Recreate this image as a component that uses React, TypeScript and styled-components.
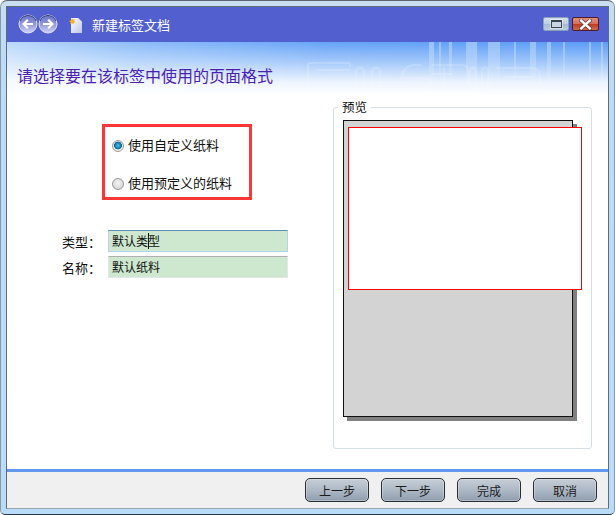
import styled, { createGlobalStyle } from "styled-components";

const GlobalStyle = createGlobalStyle`
  html, body {
    margin: 0;
    padding: 0;
    background: #ffffff;
  }
  body {
    font-family: "Noto Sans CJK SC", "Liberation Sans", sans-serif;
    font-size: 12px;
    color: #111111;
  }
`;

const NavArrow = ({ back }: { back?: boolean }) => (
  <svg width="20" height="20" viewBox="0 0 20 20">
    <defs>
      <linearGradient id={back ? "navA" : "navB"} x1="0" y1="0" x2="0" y2="1">
        <stop offset="0" stopColor="#6a73c4" />
        <stop offset="0.5" stopColor="#8f97dc" />
        <stop offset="1" stopColor="#d0d5f4" />
      </linearGradient>
    </defs>
    <circle cx="10" cy="10" r="9" fill={`url(#${back ? "navA" : "navB"})`} stroke="#dfe2f6" strokeWidth="1" />
    <path d="M2 7a8.6 8.6 0 0 1 16 0" fill="none" stroke="#333a78" strokeWidth="1" />
    <path
      d={back ? "M15 10H6M9.8 5.8L5.6 10l4.2 4.2" : "M5 10h9M10.2 5.8l4.2 4.2-4.2 4.2"}
      fill="none"
      stroke="#ffffff"
      strokeWidth="2.2"
    />
  </svg>
);

const DocIcon = () => (
  <svg width="14" height="17" viewBox="0 0 14 17">
    <defs>
      <linearGradient id="docFill" x1="0" y1="0" x2="1" y2="1">
        <stop offset="0" stopColor="#ffffff" />
        <stop offset="1" stopColor="#bcc6e6" />
      </linearGradient>
    </defs>
    <path d="M2 1h7l4 4v11H2z" fill="url(#docFill)" />
    <path d="M9 1l4 4H9z" fill="#dfe3f2" />
    <path d="M3 1l1 1.6 1.8-.4-.5 1.8 1.4 1.2-1.8.4-.4 1.8L3 6.2l-1.7.9.3-1.9L0 4l1.8-.5z" fill="#f7b21c" />
  </svg>
);

const CloseGlyph = () => (
  <svg width="13" height="11" viewBox="0 0 13 11">
    <path d="M2 1.5l9 8M11 1.5l-9 8" stroke="#4a3a3a" strokeWidth="4" strokeLinecap="square" opacity="0.75" />
    <path d="M2.2 1.6l8.6 7.8M10.8 1.6L2.2 9.4" stroke="#ffffff" strokeWidth="2.4" strokeLinecap="square" />
  </svg>
);

const Watermark = () => (
  <WatermarkSvg width="310" height="55" viewBox="0 0 310 55">
    <defs>
      <linearGradient id="barFade" x1="0" y1="0" x2="0" y2="1">
        <stop offset="0" stopColor="#ffffff" stopOpacity="0.34" />
        <stop offset="1" stopColor="#ffffff" stopOpacity="0" />
      </linearGradient>
    </defs>
    {[
      [131, 5],
      [141, 2],
      [151, 3],
      [168, 11],
      [190, 12],
      [216, 2],
      [232, 6],
      [249, 4],
      [265, 2],
      [291, 2],
      [303, 2],
    ].map(([x, w]) => (
      <rect key={x} x={x} y="0" width={w} height="46" fill="url(#barFade)" />
    ))}
    <g fill="none" stroke="#ffffff" strokeWidth="2" opacity="0.16">
      <path d="M10 21h42M10 21v22M18 28h34M52 21v4" />
      <path d="M58 44V30c0-6 8-6 8 0v14c0 3 8 3 8 0V30c0-6 8-6 8 0v14" />
      <path d="M104 36c0-6 4-13 12-13h8M102 36h24c6 0 8 3 8 8" />
      <path d="M134 23h30c6 0 6 4 6 8v10M134 32h20M146 23v20" />
      <path d="M172 44V30c0-6 6-6 6 0v14c0 3 6 3 6 0V30c0-6 6-6 6 0v14" />
      <path d="M198 26h36c6 0 8 4 8 10v7M206 35h30" />
    </g>
  </WatermarkSvg>
);

export default function App() {
  return (
    <>
      <GlobalStyle />
      <Frame>
        <Client>
          <TitleBar>
            <NavGroup>
              <NavArrow back />
              <NavArrow />
            </NavGroup>
            <DocSlot>
              <DocIcon />
            </DocSlot>
            <TitleText>新建标签文档</TitleText>
            <CaptionGroup>
              <RestoreButton>
                <RestoreGlyph />
              </RestoreButton>
              <CloseButton>
                <CloseGlyph />
              </CloseButton>
            </CaptionGroup>
          </TitleBar>

          <Header>
            <Watermark />
            <Heading>请选择要在该标签中使用的页面格式</Heading>
          </Header>

          <Body>
            <LeftColumn>
              <RadioBox>
                <RadioRow>
                  <Radio $checked />
                  使用自定义纸料
                </RadioRow>
                <RadioRow>
                  <Radio />
                  使用预定义的纸料
                </RadioRow>
              </RadioBox>
              <Fields>
                <FieldRow>
                  <FieldLabel>类型：</FieldLabel>
                  <FieldInput $focused>
                    默认类
                    <Caret />型
                  </FieldInput>
                </FieldRow>
                <FieldRow>
                  <FieldLabel>名称：</FieldLabel>
                  <FieldInput>默认纸料</FieldInput>
                </FieldRow>
              </Fields>
            </LeftColumn>

            <PreviewGroup>
              <PreviewLegend>预览</PreviewLegend>
              <Sheet>
                <LabelArea />
              </Sheet>
            </PreviewGroup>
          </Body>

          <Footer>
            <WizardButton>上一步</WizardButton>
            <WizardButton>下一步</WizardButton>
            <WizardButton>完成</WizardButton>
            <WizardButton>取消</WizardButton>
          </Footer>
        </Client>
      </Frame>
    </>
  );
}

const Frame = styled.div`
  box-sizing: border-box;
  width: 615px;
  height: 515px;
  padding: 5px;
  background: linear-gradient(to bottom, #c9dff0 0, #bcdcf8 40px, #b9dcfb 100%);
  border-top: 1px solid #5c6670;
  border-bottom: 1px solid #2c3640;
  border-left: 1px solid #8c98a4;
  border-right: 1px solid #8c98a4;
  border-radius: 7px 7px 5px 5px;
`;

const Client = styled.div`
  box-sizing: border-box;
  height: 100%;
  display: flex;
  flex-direction: column;
  background: #ffffff;
  border: 1px solid #5f6c78;
  border-bottom-color: #9aa4ac;
`;

const TitleBar = styled.div`
  height: 35px;
  flex: none;
  display: flex;
  align-items: center;
  padding: 0 9px 0 11px;
  background: #525fce;
`;

const NavGroup = styled.div`
  display: flex;
  margin-top: -1px;
  line-height: 0;
`;

const DocSlot = styled.div`
  margin-left: 11px;
  margin-top: 1px;
  line-height: 0;
`;

const TitleText = styled.span`
  margin-left: 9px;
  font-size: 13px;
  color: #ffffff;
`;

const CaptionGroup = styled.div`
  margin-left: auto;
  display: flex;
  gap: 3px;
  margin-top: -1px;
`;

const CaptionButton = styled.div`
  box-sizing: border-box;
  height: 14px;
  display: flex;
  align-items: center;
  justify-content: center;
  border-radius: 2px;
`;

const RestoreButton = styled(CaptionButton)`
  width: 26px;
  border: 1px solid #8ba0b6;
  background: linear-gradient(to bottom, #d3e0ec 0, #bccedd 50%, #a6bdd1 52%, #bacddc 100%);
`;

const RestoreGlyph = styled.span`
  box-sizing: border-box;
  width: 11px;
  height: 8px;
  border: 1px solid #3a4656;
  border-top-width: 2px;
  background: #c9d6e2;
  box-shadow: 0 0 0 1px rgba(255, 255, 255, 0.4);
`;

const CloseButton = styled(CaptionButton)`
  width: 27px;
  border: 1px solid #4c1c2c;
  background: linear-gradient(to bottom, #e0907c 0, #d5705a 48%, #bd3c20 52%, #cf6a50 100%);
`;

const Header = styled.div`
  position: relative;
  height: 55px;
  flex: none;
  display: flex;
  align-items: flex-end;
  padding-left: 10px;
  box-sizing: border-box;
  background: linear-gradient(to bottom, rgba(255, 255, 255, 0) 0, rgba(255, 255, 255, 0.42) 20px, rgba(255, 255, 255, 0.88) 40px, #ffffff 53px),
    linear-gradient(to right, #bcd9fb 0, #8cbcf9 130px, #66a3f7 320px, #5b9df6 100%);
`;

const WatermarkSvg = styled.svg`
  position: absolute;
  top: 0;
  right: 0;
`;

const Heading = styled.h1`
  position: relative;
  margin: 0 0 10px 0;
  font-size: 16px;
  font-weight: 400;
  line-height: 24px;
  color: #4a22b0;
`;

const Body = styled.div`
  flex: 1;
  min-height: 0;
  display: flex;
`;

const LeftColumn = styled.div`
  width: 326px;
  flex: none;
  box-sizing: border-box;
  padding: 27px 0 0 55px;
`;

const RadioBox = styled.div`
  box-sizing: border-box;
  width: 150px;
  height: 76px;
  margin-left: 40px;
  padding: 2px 0 0 7px;
  border: 3px solid #ff3636;
  display: flex;
  flex-direction: column;
  justify-content: center;
  gap: 16px;
`;

const RadioRow = styled.div`
  display: flex;
  align-items: center;
  gap: 4px;
  height: 22px;
  font-size: 13px;
  white-space: nowrap;
  color: #111111;
`;

const Radio = styled.span<{ $checked?: boolean }>`
  box-sizing: border-box;
  width: 12px;
  height: 12px;
  margin-top: 4px;
  border-radius: 50%;
  border: 1px solid #9a9a9a;
  background: ${(p) =>
    p.$checked
      ? "radial-gradient(circle at 50% 45%, #4fc0e8 0, #1784b4 36%, #0f5f8a 50%, #f2f2f2 56%, #e6e6e6 100%)"
      : "radial-gradient(circle at 50% 40%, #f4f4f4 0, #dcdcdc 60%, #c8c8c8 100%)"};
`;

const Fields = styled.div`
  margin-top: 30px;
  display: flex;
  flex-direction: column;
  gap: 4px;
`;

const FieldRow = styled.div`
  display: flex;
  align-items: center;
`;

const FieldLabel = styled.span`
  width: 46px;
  flex: none;
  font-size: 13px;
  white-space: nowrap;
`;

const FieldInput = styled.div<{ $focused?: boolean }>`
  box-sizing: border-box;
  width: 180px;
  height: 22px;
  line-height: 20px;
  padding-left: 3px;
  font-size: 12px;
  background: #cde8ce;
  border: 1px solid ${(p) => (p.$focused ? "#b6d4ea" : "#e2e8ea")};
  border-top-color: ${(p) => (p.$focused ? "#5f8fb8" : "#b0b0b0")};
`;

const Caret = styled.span`
  display: inline-block;
  width: 1px;
  height: 16px;
  margin-right: -1px;
  vertical-align: -3px;
  background: #111111;
`;

const PreviewGroup = styled.fieldset`
  box-sizing: border-box;
  width: 259px;
  height: 350px;
  margin: 2px 0 0 0;
  padding: 5px 0 0 9px;
  min-width: 0;
  border: 1px solid #d5dfe6;
  border-radius: 3px;
`;

const PreviewLegend = styled.legend`
  margin-left: -5px;
  padding: 0 4px;
  font-size: 12.5px;
  line-height: 16px;
  color: #111111;
`;

const Sheet = styled.div`
  position: relative;
  box-sizing: border-box;
  width: 230px;
  height: 297px;
  background: #d3d3d3;
  border: 1px solid #111111;
  box-shadow: 4px 4px 0 #808080;
`;

const LabelArea = styled.div`
  position: absolute;
  top: 6px;
  left: 4px;
  box-sizing: border-box;
  width: 234px;
  height: 163px;
  background: #ffffff;
  border: 1px solid #ff0000;
`;

const Footer = styled.div`
  height: 39px;
  flex: none;
  box-sizing: border-box;
  border-top: 3px solid #6096ee;
  background: #f0f0f0;
  display: flex;
  align-items: center;
  justify-content: flex-end;
  gap: 12px;
  padding-right: 11px;
`;

const WizardButton = styled.button`
  box-sizing: border-box;
  width: 64px;
  height: 24px;
  padding: 0;
  font-family: inherit;
  font-size: 12px;
  color: #1c1c1c;
  border: 1px solid #2a2e33;
  border-radius: 5px;
  box-shadow: inset 0 0 0 1px rgba(255, 255, 255, 0.3);
  background: linear-gradient(to bottom, #c6ced7 0, #aeb9c6 50%, #8f9dae 100%);
`;
